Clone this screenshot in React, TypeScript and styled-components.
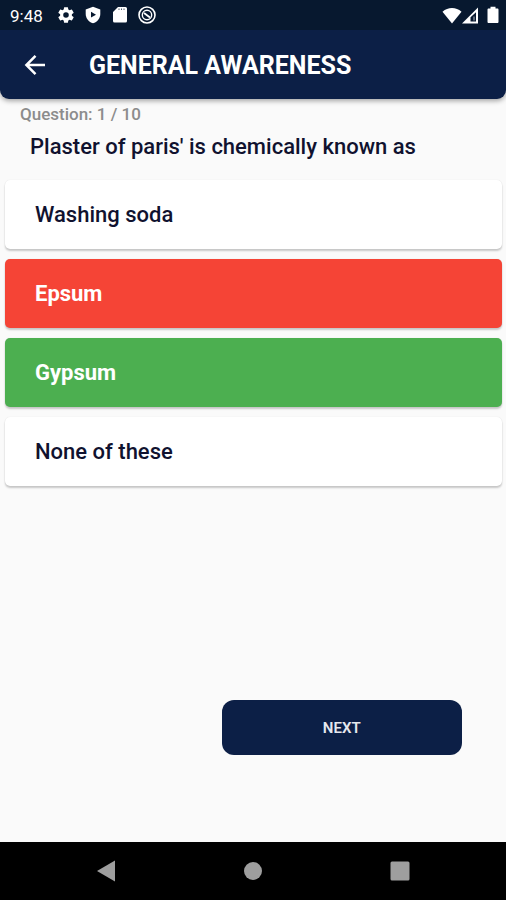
import React from "react";
import styled, { createGlobalStyle } from "styled-components";

const GlobalStyle = createGlobalStyle`
  *, *::before, *::after { box-sizing: border-box; }
  body { margin: 0; background: #fafafa; font-family: Roboto, sans-serif; }
  button { font-family: inherit; cursor: pointer; }
`;

const Screen = styled.div`
  display: flex;
  flex-direction: column;
  min-height: 100vh;
  background: #fafafa;
`;

const Top = styled.header`
  background: #0c1f46;
  color: #fff;
  border-radius: 0 0 9px 9px;
  overflow: hidden;
  box-shadow: 0 2px 5px rgba(0, 0, 0, 0.35);
`;

const StatusBar = styled.div`
  display: flex;
  align-items: center;
  justify-content: space-between;
  height: 30px;
  padding: 0 7px 0 10px;
  background: #07182f;
`;

const StatusGroup = styled.div<{ $gap: number }>`
  display: flex;
  align-items: center;
  gap: ${(p) => p.$gap}px;
`;

const Clock = styled.time`
  font-size: 17px;
  line-height: 30px;
  margin-right: 5px;
  padding-top: 2px;
`;

const BatterySlot = styled.span`
  display: flex;
  padding-left: 8px;
`;

const AppBar = styled.div`
  display: flex;
  align-items: center;
  gap: 40px;
  height: 69px;
  padding: 0 21px;
`;

const BackButton = styled.button`
  display: flex;
  padding: 0;
  border: 0;
  background: none;
  color: #fff;
`;

const Title = styled.h1`
  margin: 0;
  padding-top: 2px;
  font-size: 25px;
  line-height: 32px;
  font-weight: 700;
`;

const Main = styled.main`
  flex: 1;
  display: flex;
  flex-direction: column;
  padding: 3px 4px 0 5px;
`;

const Progress = styled.p`
  margin: 0;
  padding: 0 15px;
  font-size: 17px;
  line-height: 24px;
  font-weight: 500;
  color: #8c8c8c;
`;

const Question = styled.h2`
  margin: 5px 0 17px;
  padding: 0 25px;
  font-size: 22px;
  line-height: 32px;
  font-weight: 500;
  color: #10122f;
`;

const Options = styled.div`
  display: flex;
  flex-direction: column;
  gap: 10px;
`;

type Result = "plain" | "wrong" | "right";

const fills: Record<Result, string> = {
  plain: "#ffffff",
  wrong: "#f54436",
  right: "#4caf50",
};

const Option = styled.button<{ $result: Result }>`
  min-height: 69px;
  padding: 0 30px;
  border: 0;
  border-radius: 5px;
  background: ${(p) => fills[p.$result]};
  color: ${(p) => (p.$result === "plain" ? "#10122f" : "#fff")};
  font-size: 22px;
  line-height: 32px;
  font-weight: ${(p) => (p.$result === "plain" ? 500 : 700)};
  text-align: left;
  box-shadow: 0 2px 2px rgba(0, 0, 0, 0.2), 0 0 1px rgba(0, 0, 0, 0.12);
`;

const NextButton = styled.button`
  align-self: flex-end;
  width: calc(50% - 8px);
  height: 55px;
  margin: auto 40px 87px 0;
  border: 0;
  border-radius: 12px;
  background: #0c1f46;
  color: #e6e8ee;
  font-size: 15px;
  font-weight: 600;
`;

const NavBar = styled.nav`
  display: grid;
  grid-template-columns: repeat(3, 1fr);
  height: 58px;
  padding: 0 32px;
  background: #000;
`;

const NavButton = styled.button`
  display: flex;
  align-items: center;
  justify-content: center;
  padding: 0;
  border: 0;
  background: none;
  color: #9e9e9e;
`;

const Gear = () => (
  <svg width="18" height="18" viewBox="1 1 22 22" fill="currentColor" aria-hidden="true">
    <path d="M19.14 12.94c.04-.3.06-.61.06-.94s-.02-.64-.07-.94l2.03-1.58a.49.49 0 0 0 .12-.61l-1.92-3.32a.49.49 0 0 0-.59-.22l-2.39.96a7 7 0 0 0-1.62-.94l-.36-2.54a.48.48 0 0 0-.48-.41h-3.84a.47.47 0 0 0-.47.41l-.36 2.54c-.59.24-1.13.57-1.62.94l-2.39-.96a.48.48 0 0 0-.59.22L2.74 8.87a.48.48 0 0 0 .12.61l2.03 1.58a7 7 0 0 0-.02 1.88l-2.03 1.58a.49.49 0 0 0-.12.61l1.92 3.32c.12.22.37.29.59.22l2.39-.96c.5.38 1.03.7 1.62.94l.36 2.54c.05.24.24.41.48.41h3.84c.24 0 .44-.17.47-.41l.36-2.54a6.6 6.6 0 0 0 1.62-.94l2.39.96c.22.08.47 0 .59-.22l1.92-3.32a.48.48 0 0 0-.12-.61zM12 15.4a3.4 3.4 0 1 1 0-6.8 3.4 3.4 0 0 1 0 6.8z" />
  </svg>
);

const Shield = () => (
  <svg width="18" height="18" viewBox="-1 0 18 18" aria-hidden="true">
    <path fill="currentColor" d="M8 .8 15.300 3.400V8c0 4.300-3 8-7.300 9.300C3.700 16 .7 12.300.7 8V3.400z" />
    <path fill="#07182f" d="M6 5.800 11 8.700 6 11.600z" />
  </svg>
);

const SdCard = () => (
  <svg width="18" height="18" viewBox="-2 0 18 18" aria-hidden="true">
    <path fill="currentColor" d="M5 1h7.500A1.500 1.500 0 0 1 14 2.500v12.500a1.500 1.500 0 0 1-1.500 1.500h-11A1.500 1.500 0 0 1 0 15V6z" />
    <path stroke="#07182f" strokeWidth="1" opacity=".7" d="M6 2.500v1.500M8.500 2.500v1.500M11 2.500v1.500" />
  </svg>
);

const Disc = () => (
  <svg width="18" height="18" viewBox="0 0 18 18" fill="none" stroke="currentColor" aria-hidden="true">
    <circle cx="9" cy="9" r="8" strokeWidth="1.600" />
    <circle cx="9" cy="9" r="4.700" strokeWidth="1.400" />
    <path strokeWidth="1.800" d="M6 7 12 11.500" />
  </svg>
);

const Wifi = () => (
  <svg width="20" height="17" viewBox="0 0 20 17" aria-hidden="true">
    <path fill="currentColor" d="M10 16.500.5 4.700C3.300 2.300 6.500 1 10 1s6.700 1.300 9.500 3.700z" />
  </svg>
);

const Signal = () => (
  <svg width="17" height="17" viewBox="0 0 17 17" aria-hidden="true">
    <path fill="currentColor" fillRule="evenodd" d="M0 16.500 16 .5v16zM8.500 10.300v4.200H14V5.300z" />
    <path fill="currentColor" d="M11 9.500h2v4h-2z" opacity=".35" />
  </svg>
);

const Battery = () => (
  <svg width="12" height="18" viewBox="0 0 12 18" aria-hidden="true">
    <path fill="currentColor" d="M3.500.8h5v1.700h1.800c.9 0 1.200.5 1.200 1.200v12.100c0 .8-.4 1.200-1.200 1.200H1.700c-.8 0-1.200-.4-1.200-1.200V3.700c0-.7.4-1.200 1.200-1.200h1.800z" />
  </svg>
);

const BackArrow = () => (
  <svg width="28" height="28" viewBox="0 0 28 28" fill="none" stroke="currentColor" strokeWidth="2.500" aria-hidden="true">
    <path d="M24 14H6M14.500 4.900 5.400 14l9.100 9.100" />
  </svg>
);

const options: { label: string; result: Result }[] = [
  { label: "Washing soda", result: "plain" },
  { label: "Epsum", result: "wrong" },
  { label: "Gypsum", result: "right" },
  { label: "None of these", result: "plain" },
];

export default function App() {
  return (
    <Screen>
      <GlobalStyle />
      <Top>
        <StatusBar>
          <StatusGroup $gap={9}>
            <Clock>9:48</Clock>
            <Gear />
            <Shield />
            <SdCard />
            <Disc />
          </StatusGroup>
          <StatusGroup $gap={0}>
            <Wifi />
            <Signal />
            <BatterySlot>
              <Battery />
            </BatterySlot>
          </StatusGroup>
        </StatusBar>
        <AppBar>
          <BackButton type="button" aria-label="Back">
            <BackArrow />
          </BackButton>
          <Title>GENERAL AWARENESS</Title>
        </AppBar>
      </Top>
      <Main>
        <Progress>Question: 1 / 10</Progress>
        <Question>Plaster of paris' is chemically known as</Question>
        <Options>
          {options.map((o) => (
            <Option key={o.label} type="button" $result={o.result}>
              {o.label}
            </Option>
          ))}
        </Options>
        <NextButton type="button">NEXT</NextButton>
      </Main>
      <NavBar aria-label="System">
        <NavButton type="button" aria-label="Back">
          <svg width="20" height="22" viewBox="0 0 20 22" fill="currentColor" aria-hidden="true">
            <path d="M19 .5v21L1 11z" />
          </svg>
        </NavButton>
        <NavButton type="button" aria-label="Home">
          <svg width="20" height="20" viewBox="0 0 20 20" fill="currentColor" aria-hidden="true">
            <circle cx="10" cy="10" r="9" />
          </svg>
        </NavButton>
        <NavButton type="button" aria-label="Recent apps">
          <svg width="20" height="20" viewBox="0 0 20 20" fill="currentColor" aria-hidden="true">
            <rect x=".5" y=".5" width="19" height="19" rx="1.500" />
          </svg>
        </NavButton>
      </NavBar>
    </Screen>
  );
}
